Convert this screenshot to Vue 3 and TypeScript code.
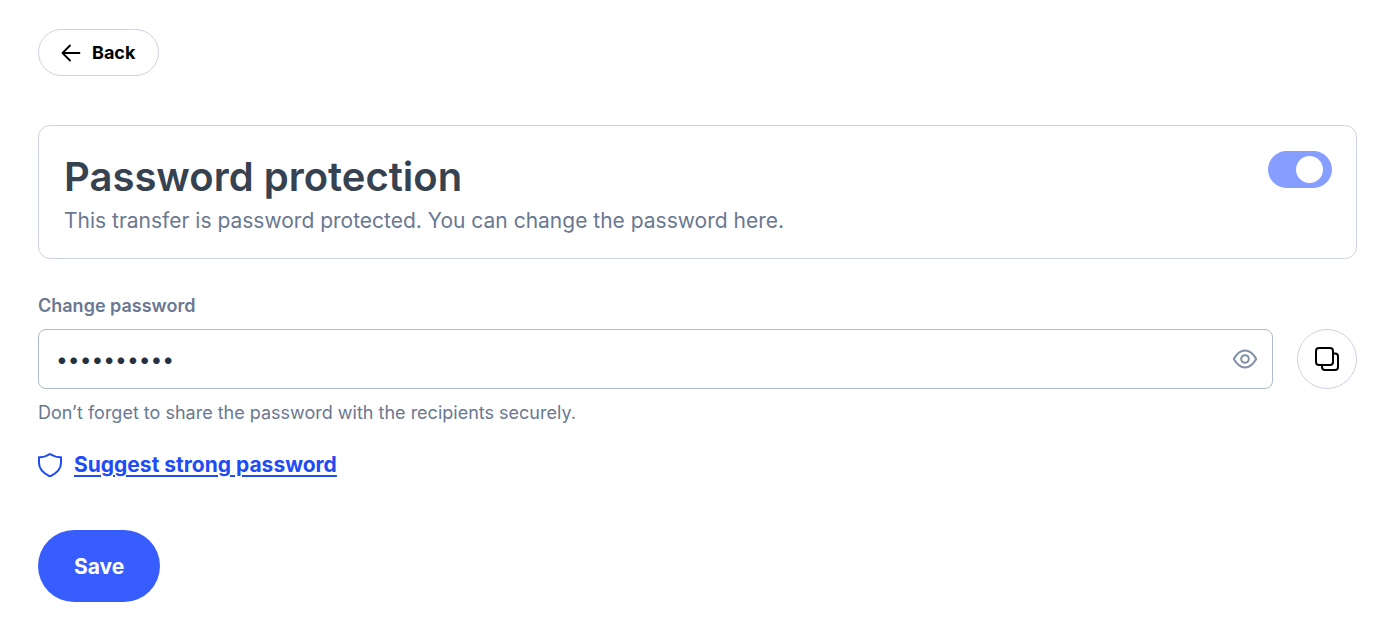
<script setup lang="ts">
import { ref } from 'vue'

const enabled = ref(true)
const password = ref('sunflower7')
const visible = ref(false)

function suggestPassword() {
  const alphabet = 'abcdefghijkmnpqrstuvwxyzABCDEFGHJKLMNPQRSTUVWXYZ23456789'
  const values = crypto.getRandomValues(new Uint32Array(14))
  password.value = Array.from(values, (n) => alphabet[n % alphabet.length]).join('')
}

function copyPassword() {
  navigator.clipboard?.writeText(password.value)
}
</script>

<template>
  <main class="page">
    <button class="back" type="button">
      <svg width="20" height="20" viewBox="0 0 20 20" aria-hidden="true">
        <path d="M18.5 10H2M9 2.5L1.5 10L9 17.5" />
      </svg>
      Back
    </button>

    <section class="card">
      <div>
        <h1 id="protection-title">Password protection</h1>
        <p>This transfer is password protected. You can change the password here.</p>
      </div>
      <input v-model="enabled" class="toggle" type="checkbox" role="switch" aria-labelledby="protection-title" />
    </section>

    <form class="form" @submit.prevent>
      <label class="label" for="password">Change password</label>
      <div class="row">
        <div class="field">
          <input id="password" v-model="password" :type="visible ? 'text' : 'password'" aria-describedby="hint" autocomplete="new-password" />
          <button class="eye" type="button" aria-label="Show password" @click="visible = !visible">
            <svg width="26" height="20" viewBox="0 0 26 20" aria-hidden="true">
              <path d="M1.8 10C4.600 5 8.300 1.500 13 1.500S21.400 5 24.200 10C21.400 15 17.700 18.500 13 18.500S4.600 15 1.800 10Z" />
              <circle cx="13" cy="10" r="3.800" />
            </svg>
          </button>
        </div>
        <button class="copy" type="button" aria-label="Copy password" @click="copyPassword">
          <svg width="26" height="26" viewBox="0 0 26 26" aria-hidden="true">
            <rect x="2" y="2" width="17" height="17" rx="3" />
            <path d="M19 7.500H21Q24 7.500 24 10.500V21Q24 24 21 24H11Q8 24 8 21V19" />
          </svg>
        </button>
      </div>
      <p id="hint" class="hint">Don’t forget to share the password with the recipients securely.</p>
      <div class="suggest">
        <svg width="24" height="24" viewBox="0 0 24 24" aria-hidden="true">
          <path d="M12 1C9 3 5 4.200 1 4.200V10C1 15.500 5 20 12 23.500C19 20 23 15.500 23 10V4.200C19 4.200 15 3 12 1Z" />
        </svg>
        <a href="#" @click.prevent="suggestPassword">Suggest strong password</a>
      </div>
      <button class="save" type="submit">Save</button>
    </form>
  </main>
</template>

<style>
body {
  margin: 0;
  background: #fff;
}
</style>

<style scoped>
* {
  box-sizing: border-box;
}

.page {
  padding: 29px 43px 38px 38px;
  font-family: Inter, "Liberation Sans", sans-serif;
  color: #6a7891;
}

button,
input {
  font-family: inherit;
}

button {
  cursor: pointer;
}

svg {
  display: block;
  flex: none;
  fill: none;
  stroke: currentColor;
  stroke-width: 2;
  stroke-linecap: round;
  stroke-linejoin: round;
}

h1,
p {
  margin: 0;
}

.back {
  display: flex;
  align-items: center;
  gap: 11px;
  height: 47px;
  padding: 0 23px 0 22px;
  border: 1px solid #cdd2e3;
  border-radius: 24px;
  background: #fff;
  color: #000;
  font-size: 18px;
  font-weight: 700;
}

.back svg {
  stroke-width: 1.8;
}

.card {
  display: flex;
  justify-content: space-between;
  align-items: flex-start;
  margin-top: 49px;
  padding: 23px 24px 21px 25px;
  border: 1px solid #cdd2e3;
  border-radius: 12px;
}

h1 {
  color: #36424f;
  font-size: 40px;
  line-height: 56px;
  font-weight: 600;
}

.card p {
  font-size: 21px;
  line-height: 32px;
}

.toggle {
  appearance: none;
  flex: none;
  display: flex;
  align-items: center;
  width: 64px;
  height: 37px;
  margin: 2px 0 0;
  padding: 0 9px;
  border-radius: 19px;
  background: #c3cad8;
  cursor: pointer;
}

.toggle:checked {
  justify-content: flex-end;
  background: #869eff;
}

.toggle::before {
  content: "";
  width: 27px;
  height: 27px;
  border-radius: 50%;
  background: #fff;
}

.form {
  margin-top: 35px;
}

.label {
  display: block;
  font-size: 18px;
  line-height: 24px;
  font-weight: 600;
}

.row {
  display: flex;
  gap: 24px;
  margin-top: 11px;
}

.field {
  flex: 1;
  display: flex;
  align-items: center;
  height: 60px;
  padding-right: 14px;
  border: 1px solid #aebbcb;
  border-radius: 8px;
}

.field input {
  flex: 1;
  min-width: 0;
  height: 100%;
  padding: 0 17px;
  border: 0;
  border-radius: 8px;
  outline: 0;
  background: transparent;
  color: #253140;
  font-size: 21px;
}

.eye {
  padding: 0;
  border: 0;
  background: none;
  color: #8090a8;
}

.copy {
  display: grid;
  place-items: center;
  width: 60px;
  height: 60px;
  padding: 0;
  border: 1px solid #cdd2e3;
  border-radius: 50%;
  background: #fff;
  color: #000;
}

.hint {
  margin-top: 12px;
  font-size: 18px;
  line-height: 24px;
}

.suggest {
  display: flex;
  align-items: center;
  gap: 12px;
  margin-top: 24px;
  color: #1f4cf5;
  font-size: 21px;
  line-height: 32px;
  font-weight: 700;
}

.suggest a {
  color: inherit;
  text-underline-offset: 3px;
  text-decoration-thickness: 2px;
}

.save {
  height: 72px;
  margin-top: 49px;
  padding: 0 36px;
  border: 0;
  border-radius: 36px;
  background: #375dfe;
  color: #fff;
  font-size: 21px;
  font-weight: 700;
}
</style>
